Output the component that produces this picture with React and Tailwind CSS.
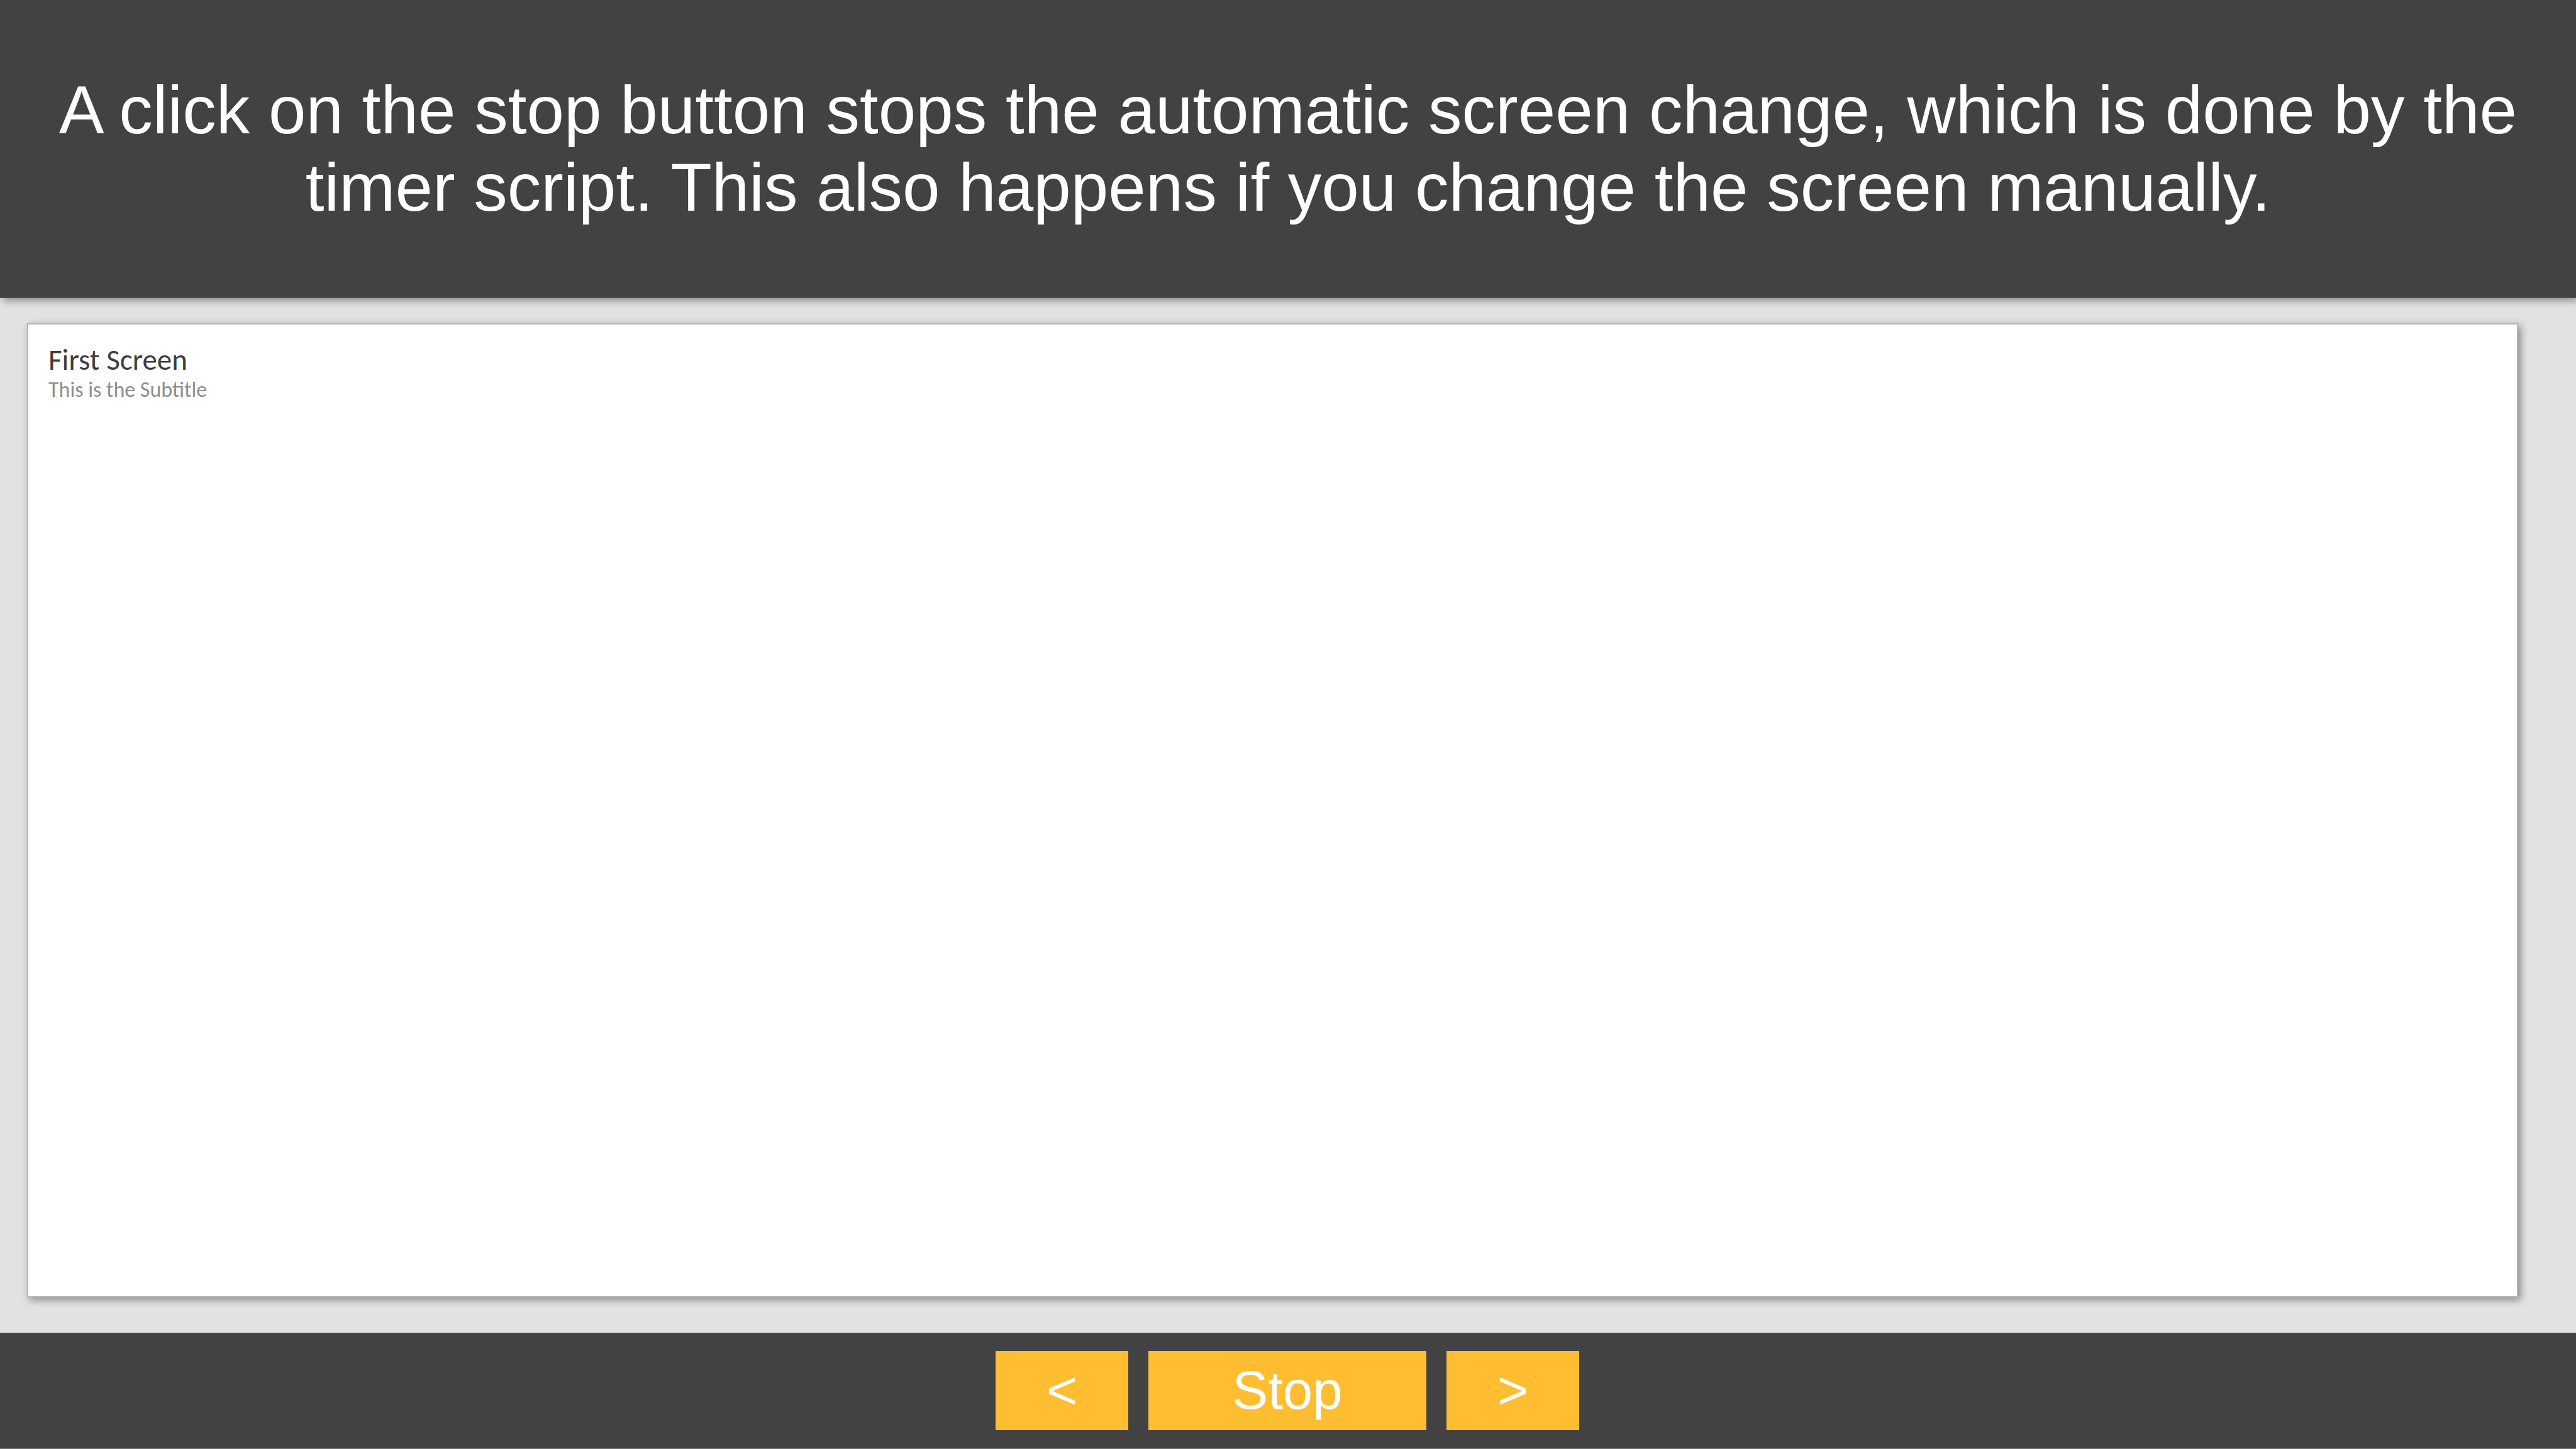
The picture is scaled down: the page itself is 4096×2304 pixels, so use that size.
export default function App() {
  return (
    <div className="flex min-h-screen flex-col bg-[#e2e2e2] font-['Liberation_Sans',Arial,sans-serif]">
      <header className="flex h-[474px] items-center justify-center border-b border-[#5c5c5c] bg-[#424242] px-20 shadow-[4px_4px_12px_rgba(0,0,0,0.4)]">
        <p className="text-center text-[107px] leading-[123px] text-white">
          A click on the stop button stops the automatic screen change, which is done by the timer
          script. This also happens if you change the screen manually.
        </p>
      </header>

      <main className="flex flex-1 flex-col pt-10 pr-[92px] pb-14 pl-[43px]">
        <section className="flex-1 border-2 border-[#b6b6b6] bg-white px-8 pt-7 font-['Carlito',Lato,sans-serif] shadow-[4px_4px_12px_rgba(0,0,0,0.4)]">
          <h1 className="text-[47px] leading-[56px] text-[#3f3f3f]">First Screen</h1>
          <h2 className="text-[34px] leading-[40px] text-[#8e8e8e]">This is the Subtitle</h2>
        </section>
      </main>

      <footer className="flex justify-center gap-8 border-y border-[#7c7c7c] bg-[#424242] pt-7 pr-0.5 pb-[29px] text-[85px] leading-none text-white">
        <button type="button" aria-label="Previous screen" className="h-[126px] w-[211px] bg-[#ffbe32] pb-0.5">
          &lt;
        </button>
        <button type="button" className="h-[126px] w-[442px] bg-[#ffbe32] pb-0.5">
          Stop
        </button>
        <button type="button" aria-label="Next screen" className="h-[126px] w-[211px] bg-[#ffbe32] pb-0.5">
          &gt;
        </button>
      </footer>
    </div>
  );
}
